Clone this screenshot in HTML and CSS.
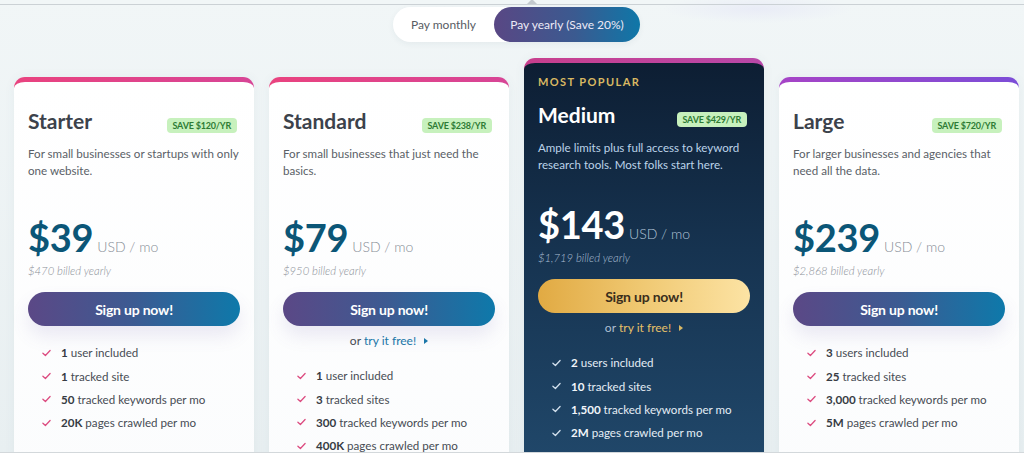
FILE: index.html
```html
<!DOCTYPE html>
<html lang="en">
<head>
<meta charset="utf-8">
<title>Pricing</title>
<link rel="stylesheet" href="styles.css">
</head>
<body>
<div class="page">
  <div class="topline"></div>
  <div class="toggle-row">
    <div class="toggle">
      <span class="opt">Pay monthly</span>
      <span class="opt active">Pay yearly (Save 20%)</span>
    </div>
  </div>

  <div class="cards">
    <div class="card card-pink">
      <div class="head">
        <h2 class="title">Starter</h2>
        <span class="badge">SAVE $120/YR</span>
      </div>
      <p class="desc">For small businesses or startups with only one website.</p>
      <div class="price"><span class="amount">$39</span><span class="unit">USD / mo</span></div>
      <div class="billed">$470 billed yearly</div>
      <a class="btn">Sign up now!</a>
      <ul class="features">
        <li><svg class="check" viewBox="0 0 10 8"><path d="M1 4.2 L3.8 6.8 L9 1.2"/></svg><span><b>1</b> user included</span></li>
        <li><svg class="check" viewBox="0 0 10 8"><path d="M1 4.2 L3.8 6.8 L9 1.2"/></svg><span><b>1</b> tracked site</span></li>
        <li><svg class="check" viewBox="0 0 10 8"><path d="M1 4.2 L3.8 6.8 L9 1.2"/></svg><span><b>50</b> tracked keywords per mo</span></li>
        <li><svg class="check" viewBox="0 0 10 8"><path d="M1 4.2 L3.8 6.8 L9 1.2"/></svg><span><b>20K</b> pages crawled per mo</span></li>
      </ul>
    </div>

    <div class="card card-pink">
      <div class="head">
        <h2 class="title">Standard</h2>
        <span class="badge">SAVE $238/YR</span>
      </div>
      <p class="desc">For small businesses that just need the basics.</p>
      <div class="price"><span class="amount">$79</span><span class="unit">USD / mo</span></div>
      <div class="billed">$950 billed yearly</div>
      <a class="btn">Sign up now!</a>
      <div class="try">or <span class="try-link">try it free!</span><svg class="arrow" viewBox="0 0 4 6"><path d="M0 0 L4 3 L0 6 Z"/></svg></div>
      <ul class="features">
        <li><svg class="check" viewBox="0 0 10 8"><path d="M1 4.2 L3.8 6.8 L9 1.2"/></svg><span><b>1</b> user included</span></li>
        <li><svg class="check" viewBox="0 0 10 8"><path d="M1 4.2 L3.8 6.8 L9 1.2"/></svg><span><b>3</b> tracked sites</span></li>
        <li><svg class="check" viewBox="0 0 10 8"><path d="M1 4.2 L3.8 6.8 L9 1.2"/></svg><span><b>300</b> tracked keywords per mo</span></li>
        <li><svg class="check" viewBox="0 0 10 8"><path d="M1 4.2 L3.8 6.8 L9 1.2"/></svg><span><b>400K</b> pages crawled per mo</span></li>
      </ul>
    </div>

    <div class="card card-featured">
      <div class="popular">MOST POPULAR</div>
      <div class="head">
        <h2 class="title">Medium</h2>
        <span class="badge">SAVE $429/YR</span>
      </div>
      <p class="desc">Ample limits plus full access to keyword research tools. Most folks start here.</p>
      <div class="price"><span class="amount">$143</span><span class="unit">USD / mo</span></div>
      <div class="billed">$1,719 billed yearly</div>
      <a class="btn btn-gold">Sign up now!</a>
      <div class="try">or <span class="try-link">try it free!</span><svg class="arrow" viewBox="0 0 4 6"><path d="M0 0 L4 3 L0 6 Z"/></svg></div>
      <ul class="features">
        <li><svg class="check" viewBox="0 0 10 8"><path d="M1 4.2 L3.8 6.8 L9 1.2"/></svg><span><b>2</b> users included</span></li>
        <li><svg class="check" viewBox="0 0 10 8"><path d="M1 4.2 L3.8 6.8 L9 1.2"/></svg><span><b>10</b> tracked sites</span></li>
        <li><svg class="check" viewBox="0 0 10 8"><path d="M1 4.2 L3.8 6.8 L9 1.2"/></svg><span><b>1,500</b> tracked keywords per mo</span></li>
        <li><svg class="check" viewBox="0 0 10 8"><path d="M1 4.2 L3.8 6.8 L9 1.2"/></svg><span><b>2M</b> pages crawled per mo</span></li>
      </ul>
    </div>

    <div class="card card-purple">
      <div class="head">
        <h2 class="title">Large</h2>
        <span class="badge">SAVE $720/YR</span>
      </div>
      <p class="desc">For larger businesses and agencies that need all the data.</p>
      <div class="price"><span class="amount">$239</span><span class="unit">USD / mo</span></div>
      <div class="billed">$2,868 billed yearly</div>
      <a class="btn">Sign up now!</a>
      <ul class="features">
        <li><svg class="check" viewBox="0 0 10 8"><path d="M1 4.2 L3.8 6.8 L9 1.2"/></svg><span><b>3</b> users included</span></li>
        <li><svg class="check" viewBox="0 0 10 8"><path d="M1 4.2 L3.8 6.8 L9 1.2"/></svg><span><b>25</b> tracked sites</span></li>
        <li><svg class="check" viewBox="0 0 10 8"><path d="M1 4.2 L3.8 6.8 L9 1.2"/></svg><span><b>3,000</b> tracked keywords per mo</span></li>
        <li><svg class="check" viewBox="0 0 10 8"><path d="M1 4.2 L3.8 6.8 L9 1.2"/></svg><span><b>5M</b> pages crawled per mo</span></li>
      </ul>
    </div>
  </div>
</div>
</body>
</html>
```

FILE: styles.css
```css
* { box-sizing: border-box; }

html, body {
  margin: 0;
  padding: 0;
}

body {
  font-family: Lato, "Open Sans", "Liberation Sans", sans-serif;
  background:
    radial-gradient(ellipse 95px 14px at 757px 9px, rgba(230, 232, 246, 0.7), rgba(230, 232, 246, 0)),
    linear-gradient(180deg, #f1f6f7 0%, #e8eff1 100%);
  color: #3c424c;
}

.page {
  height: 453px;
  overflow: hidden;
  border-bottom: 1px solid #d3d8db;
}

.topline {
  position: relative;
  height: 5px;
  border-bottom: 1px solid #cbd1d5;
}

.topline::after {
  content: "";
  position: absolute;
  left: 527px;
  top: -1px;
  border-left: 5px solid transparent;
  border-right: 5px solid transparent;
  border-bottom: 5px solid #c3c9ce;
}

.toggle-row {
  display: flex;
  justify-content: center;
  padding-left: 9px;
  margin-top: 2px;
}

.toggle {
  display: flex;
  align-items: stretch;
  height: 35px;
  background: #ffffff;
  border-radius: 18px;
  box-shadow: 0 2px 6px rgba(40, 60, 80, 0.06);
}

.opt {
  display: flex;
  align-items: center;
  justify-content: center;
  width: 101px;
  font-size: 12px;
  color: #575c63;
}

.opt.active {
  width: 146px;
  border-radius: 18px;
  color: #eceaf6;
  background: linear-gradient(90deg, #594784 0%, #3b5a90 55%, #0f77a8 100%);
}

.cards {
  display: flex;
  align-items: flex-start;
  gap: 15px;
  padding-left: 14px;
  margin-top: 16px;
}

.card {
  width: 240px;
  flex: none;
  height: 420px;
  padding: 26px 14px 0;
  border-style: solid;
  border-color: transparent;
  border-width: 5px 0 0 0;
  border-radius: 11px 11px 0 0;
  margin-top: 19px;
  box-shadow: 0 0 12px rgba(60, 90, 110, 0.05);
}

.card-pink {
  background:
    linear-gradient(180deg, #ffffff 0%, #fbfcfd 100%) padding-box,
    linear-gradient(90deg, #e9437f 0%, #d74596 100%) border-box;
}

.card-purple {
  background:
    linear-gradient(180deg, #ffffff 0%, #fbfcfd 100%) padding-box,
    linear-gradient(90deg, #a644c6 0%, #7c4dd7 100%) border-box;
}

.card-featured {
  margin-top: 0;
  padding-top: 12px;
  background:
    linear-gradient(180deg, #0d1e33 0%, #163350 45%, #21496c 100%) padding-box,
    linear-gradient(90deg, #c83f8d 0%, #b848a9 100%) border-box;
}

.popular {
  font-size: 11px;
  line-height: 13px;
  font-weight: 700;
  letter-spacing: 1.4px;
  color: #d8b862;
  margin-bottom: 14px;
}

.head {
  display: flex;
  justify-content: space-between;
  align-items: baseline;
}

.title {
  margin: 0;
  font-size: 21px;
  line-height: 25px;
  font-weight: 700;
  color: #3c424b;
}

.badge {
  margin-right: 3px;
  padding: 2px 6px 2px;
  font-size: 9px;
  line-height: 11px;
  font-weight: 700;
  color: #2e7b34;
  background: #c7f1bd;
  border-radius: 4px;
  letter-spacing: -0.2px;
}

.desc {
  margin: 12px 0 0;
  font-size: 11.6px;
  line-height: 17px;
  color: #5a5f67;
}

.price {
  display: flex;
  align-items: baseline;
  margin-top: 39px;
}

.amount {
  font-size: 38px;
  line-height: 38px;
  font-weight: 700;
  color: #0b5677;
  letter-spacing: -0.3px;
}

.unit {
  margin-left: 4px;
  font-size: 14px;
  font-weight: 300;
  color: #878d96;
}

.billed {
  margin-top: 8px;
  font-size: 11.3px;
  line-height: 14px;
  font-style: italic;
  font-weight: 300;
  color: #8a8f97;
}

.btn {
  display: flex;
  align-items: center;
  justify-content: center;
  height: 34px;
  margin-top: 14px;
  border-radius: 17px;
  font-size: 14px;
  font-weight: 700;
  color: #ffffff;
  background: linear-gradient(90deg, #5b4886 0%, #3c5b92 50%, #0e79aa 100%);
  box-shadow: 0 10px 18px rgba(110, 90, 170, 0.13);
  letter-spacing: -0.2px;
}

.try {
  display: flex;
  align-items: center;
  justify-content: center;
  margin-top: 6px;
  font-size: 12px;
  line-height: 17px;
  color: #454a52;
}

.try-link {
  margin-left: 3px;
  color: #1a76a8;
}

.arrow {
  width: 4px;
  height: 6px;
  margin-left: 8px;
  fill: #1a76a8;
}

.features {
  list-style: none;
  margin: 15px 0 0;
  padding: 0 0 0 14px;
}

.features li {
  display: flex;
  align-items: center;
  height: 23.4px;
  font-size: 11.6px;
  color: #474c54;
}

.features b {
  font-weight: 700;
  color: #363b43;
}

.check {
  width: 9px;
  height: 8px;
  margin-right: 10px;
  fill: none;
  stroke: #dc4a7f;
  stroke-width: 1.4;
  stroke-linecap: round;
  stroke-linejoin: round;
}

/* featured overrides */
.card-featured .title { color: #ffffff; }
.card-featured .desc { color: #bcd3e9; }
.card-featured .price { margin-top: 32px; }
.card-featured .amount { color: #ffffff; }
.card-featured .unit { color: #b3c5d8; }
.card-featured .billed { color: #a9bdd2; }
.card-featured .try { color: #aebfd2; }
.card-featured .try-link { color: #e6c068; }
.card-featured .arrow { fill: #d9b865; }
.card-featured .features li { color: #e4edf5; }
.card-featured .features b { color: #f2f6fa; }
.card-featured .check { stroke: #d3e1ee; }

.btn-gold {
  color: #3a2e1c;
  background: linear-gradient(90deg, #e1aa43 0%, #f0c973 50%, #fce3a4 100%);
  box-shadow: none;
}
```
